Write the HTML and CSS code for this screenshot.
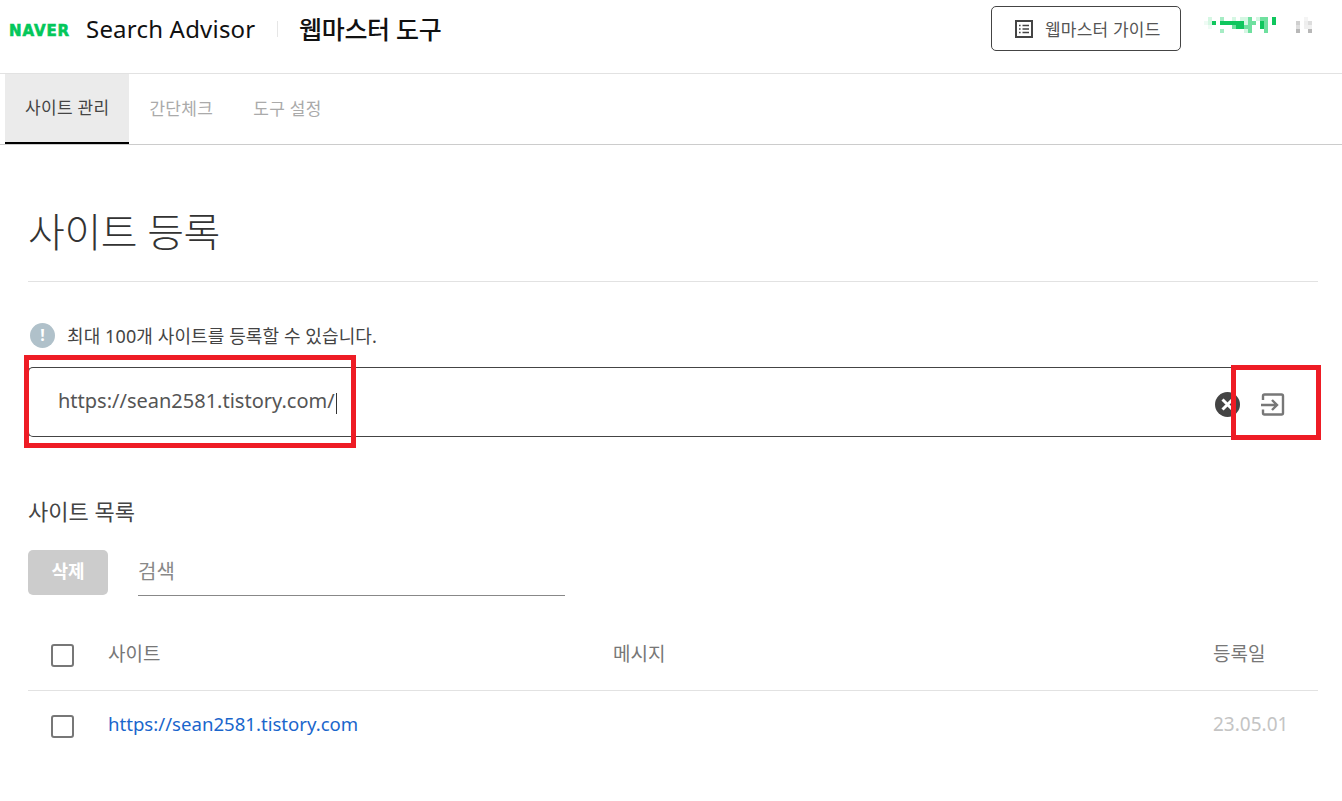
FILE: index.html
```html
<!DOCTYPE html>
<html lang="ko">
<head>
<meta charset="utf-8">
<title>웹마스터 도구</title>
<link rel="stylesheet" href="styles.css">
</head>
<body>
<header class="top">
  <div class="brand">
    <span class="naver">NAVER</span>
    <span class="product">Search Advisor</span>
    <span class="divider"></span>
    <span class="tool">웹마스터 도구</span>
  </div>
  <div class="top-right">
    <a class="guide">
      <svg class="guide-icon" width="18" height="18" viewBox="0 0 18 18" fill="none" stroke="#444" stroke-width="2"><rect x="1" y="1" width="16" height="16"/><path stroke-width="1.500" d="M4 5.500h1.600M7.500 5.500h6.500M4 9h1.600M7.500 9h6.500M4 12.500h1.600M7.500 12.500h6.500"/></svg>
      <span>웹마스터 가이드</span>
    </a>
    <svg class="blur-user" width="72" height="16" viewBox="0 0 72 16" shape-rendering="crispEdges">
      <g fill="#d5f7e3"><rect x="4" y="0" width="4" height="4"/><rect x="28" y="0" width="4" height="4"/><rect x="36" y="0" width="8" height="4"/><rect x="52" y="0" width="4" height="4"/><rect x="4" y="4" width="4" height="4"/><rect x="40" y="4" width="4" height="4"/><rect x="40" y="12" width="4" height="4"/></g>
      <g fill="#eefbf4"><rect x="0" y="4" width="4" height="4"/><rect x="4" y="8" width="4" height="4"/></g>
      <g fill="#a6ecc4"><rect x="16" y="0" width="4" height="4"/><rect x="16" y="12" width="4" height="4"/></g>
      <g fill="#6fe09f"><rect x="44" y="0" width="4" height="4"/><rect x="56" y="0" width="8" height="4"/><rect x="44" y="4" width="8" height="4"/><rect x="60" y="4" width="4" height="12"/><rect x="28" y="8" width="4" height="4"/><rect x="40" y="8" width="8" height="4"/><rect x="44" y="12" width="4" height="4"/></g>
      <g fill="#0fc65d"><rect x="68" y="0" width="4" height="8"/><rect x="8" y="4" width="4" height="4"/><rect x="16" y="4" width="24" height="4"/><rect x="56" y="4" width="4" height="8"/><rect x="32" y="8" width="8" height="4"/></g>
    </svg>
    <svg class="blur-menu" width="16" height="16" viewBox="0 0 16 16" shape-rendering="crispEdges">
      <rect x="8" y="0" width="4" height="4" fill="#f4f4f4"/><rect x="0" y="4" width="4" height="4" fill="#cfcfcf"/><rect x="8" y="4" width="4" height="4" fill="#eeeeee"/><rect x="12" y="4" width="4" height="4" fill="#dddddd"/>
      <rect x="0" y="8" width="4" height="4" fill="#dedede"/><rect x="8" y="8" width="8" height="4" fill="#f0f0f0"/><rect x="0" y="12" width="4" height="4" fill="#b8b8b8"/><rect x="12" y="12" width="4" height="4" fill="#b8b8b8"/>
    </svg>
  </div>
</header>
<nav class="tabs">
  <a class="tab active">사이트 관리</a>
  <a class="tab">간단체크</a>
  <a class="tab">도구 설정</a>
</nav>
<main class="content">
  <h1 class="title">사이트 등록</h1>
  <p class="notice"><span class="notice-icon">!</span>최대 100개 사이트를 등록할 수 있습니다.</p>
  <div class="register">
    <div class="url-field">
      <span class="url-text">https://sean2581.tistory.com/</span><span class="caret"></span>
      <svg class="clear" width="25" height="25" viewBox="0 0 25 25"><circle cx="12.500" cy="12.500" r="12.500" fill="#444"/><path d="M7.500 7.500l10 10M17.500 7.500l-10 10" stroke="#fff" stroke-width="3"/></svg>
    </div>
    <button class="submit" aria-label="등록">
      <svg width="24" height="24" viewBox="0 0 24 24" fill="none" stroke="#777" stroke-width="2.400"><path d="M2 7V3Q2 1.500 3.500 1.500H20.500Q22 1.500 22 3V20Q22 21.500 20.500 21.500H3.500Q2 21.500 2 20V16.500"/><path d="M0 12H16M11 7L16 12L11 17"/></svg>
    </button>
  </div>
  <h2 class="subtitle">사이트 목록</h2>
  <div class="actions">
    <button class="delete">삭제</button>
    <div class="search">검색</div>
  </div>
  <div class="row head">
    <span class="check"></span>
    <span class="col-site">사이트</span>
    <span class="col-msg">메시지</span>
    <span class="col-date">등록일</span>
  </div>
  <div class="row">
    <span class="check"></span>
    <a class="col-site link">https://sean2581.tistory.com</a>
    <span class="col-msg"></span>
    <span class="col-date muted">23.05.01</span>
  </div>
</main>
<div class="mark mark-input"></div>
<div class="mark mark-submit"></div>
</body>
</html>
```
FILE: styles.css
```css
* { box-sizing: border-box; }
html, body { margin: 0; padding: 0; }
body {
  position: relative;
  height: 801px;
  overflow: hidden;
  background: #fff;
  color: #333;
  font-family: "Noto Sans", "Noto Sans CJK KR", sans-serif;
}
.top {
  height: 74px;
  border-bottom: 1px solid #e2e2e2;
  display: flex;
  justify-content: space-between;
  align-items: flex-start;
  padding: 6px 30px 0 9px;
}
.brand { display: flex; align-items: center; height: 45px; }
.naver {
  font: 700 15px/1 "DejaVu Sans", sans-serif;
  -webkit-text-stroke: 0.6px #03c75a;
  color: #03c75a;
  width: 77px;
  letter-spacing: 0.9px;
  padding-top: 5px;
}
.product { font-size: 24px; line-height: 30px; color: #111; width: 191px; letter-spacing: 0.2px; }
.divider { width: 1px; height: 16px; background: #e6e6e6; margin-right: 21px; }
.tool { font-size: 25px; font-weight: 500; line-height: 30px; color: #111; letter-spacing: -0.3px; }
.top-right { display: flex; align-items: flex-start; }
.guide {
  width: 190px;
  height: 45px;
  border: 1px solid #444;
  border-radius: 5px;
  display: flex;
  align-items: center;
  gap: 12px;
  padding-left: 23px;
  font-size: 17px;
  letter-spacing: 0.2px;
  color: #555;
  margin-right: 23px;
}
.blur-user { margin-top: 11px; margin-right: 20px; }
.blur-menu { margin-top: 11px; }
.tabs {
  height: 71px;
  border-bottom: 1px solid #ccc;
  display: flex;
  padding-left: 5px;
}
.tab {
  height: 70px;
  padding: 0 20px 3px;
  display: flex;
  align-items: center;
  font-size: 17px;
  letter-spacing: 0.3px;
  color: #aaa;
}
.active {
  background: #ebebeb;
  color: #444;
  border-bottom: 2px solid #000;
}
.content { padding: 0 24px 0 28px; }
.title {
  margin: 0;
  height: 137px;
  padding-top: 55px;
  border-bottom: 1px solid #e2e2e2;
  font-size: 40px;
  font-weight: 300;
  line-height: 64px;
  letter-spacing: -0.4px;
  color: #333;
}
.notice {
  margin: 0;
  height: 85px;
  padding: 41px 0 0 2px;
  display: flex;
  align-items: flex-start;
  font-size: 18px;
  letter-spacing: 0.1px;
  line-height: 26px;
  color: #444;
}
.notice-icon {
  width: 25px;
  height: 25px;
  border-radius: 50%;
  background: #b0c1ca;
  color: #fff;
  font-weight: 700;
  font-size: 16px;
  line-height: 25px;
  text-align: center;
  margin-right: 12px;
}
.register { display: flex; height: 70px; }
.url-field {
  position: relative;
  flex: none;
  width: 1204px;
  border: 1px solid #444;
  border-right: 0;
  border-radius: 5px 0 0 5px;
  display: flex;
  align-items: center;
  padding: 0 0 4px 29px;
  font-size: 20px;
  color: #555;
}
.caret { width: 1px; height: 21px; background: #333; margin: 6px 0 0 1px; }
.clear { position: absolute; right: -8px; top: 24px; }
.submit {
  flex: none;
  width: 78px;
  border: 0;
  background: none;
  padding: 6px 0 0 4px;
  display: flex;
  align-items: center;
  justify-content: center;
}
.subtitle {
  margin: 0;
  padding-top: 58px;
  height: 113px;
  font-size: 22px;
  font-weight: 400;
  line-height: 32px;
  color: #444;
}
.actions { display: flex; height: 46px; }
.delete {
  width: 80px;
  height: 45px;
  border: 0;
  border-radius: 5px;
  background: #ccc;
  color: #fff;
  font: 700 18px "Noto Sans CJK KR", sans-serif;
  padding: 0 0 5px;
  margin-right: 30px;
}
.search {
  width: 427px;
  height: 46px;
  border-bottom: 1px solid #888;
  font-size: 20px;
  line-height: 44px;
  color: #888;
}
.row {
  display: flex;
  align-items: center;
  height: 70px;
  padding-left: 23px;
  font-size: 19px;
  color: #777;
}
.head { height: 95px; padding-top: 25px; border-bottom: 1px solid #e2e2e2; }
.check {
  flex: none;
  width: 23px;
  height: 23px;
  border: 2px solid #777;
  border-radius: 3px;
  margin-right: 34px;
}
.col-site, .col-msg, .col-date { padding-bottom: 5px; }
.col-site { width: 505px; }
.col-msg { width: 600px; }
.col-date { width: 80px; }
.link { color: #1a66cc; font-size: 18.600px; }
.muted { color: #c4c4c4; }
.mark { position: absolute; border: 5px solid #ee1c25; }
.mark-input { left: 24px; top: 355px; width: 332px; height: 93px; }
.mark-submit { left: 1231px; top: 365px; width: 90px; height: 75px; }
```
